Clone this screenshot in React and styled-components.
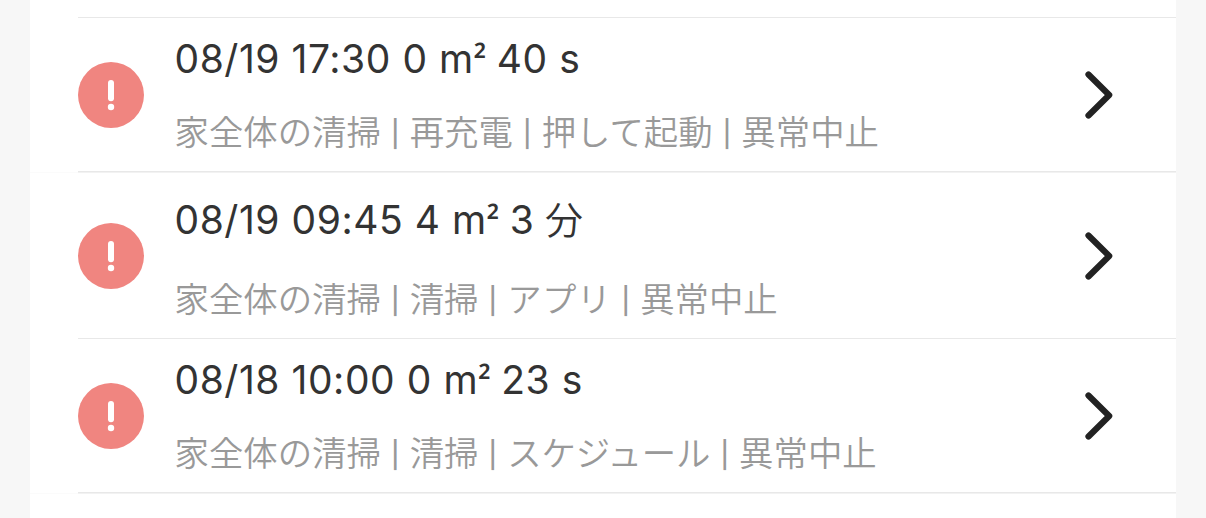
import React from 'react';
import styled, { createGlobalStyle } from 'styled-components';

const GlobalStyle = createGlobalStyle`
  * { box-sizing: border-box; }
  body {
    margin: 0;
    background: #f7f7f7;
    font-family: Inter, "Noto Sans CJK JP", sans-serif;
    overflow: hidden;
  }
`;

const Panel = styled.main`
  height: 518px;
  margin: 0 30px;
  padding-top: 17px;
  background: #fff;
  overflow: hidden;
`;

const List = styled.ul`
  margin: 0;
  padding: 0;
  list-style: none;
`;

const Divider = styled.div`
  height: 1px;
  margin-left: 48px;
  background: #e8e8e8;
`;

const SoftEdge = styled.div`
  height: 1px;
  background: linear-gradient(to right, #fbfbfb 48px, #f2f2f2 48px);
`;

const Row = styled.li`
  display: flex;
  align-items: center;
  height: ${({ $height }) => $height}px;
  padding: ${({ $shift }) => $shift}px 62px 0 48px;
`;

const StatusIcon = styled.svg`
  flex: none;
  width: 66px;
  height: 66px;
`;

const Details = styled.div`
  flex: 1;
  align-self: flex-start;
  display: flex;
  flex-direction: column;
  gap: ${({ $gap }) => $gap}px;
  margin-left: 30.5px;
  padding-top: ${({ $top }) => $top}px;
  white-space: nowrap;
`;

const Title = styled.div`
  height: 48px;
  font-size: 39px;
  line-height: 48px;
  font-weight: 400;
  letter-spacing: 0.55px;
  color: #333;
`;

const Superscript = styled.span`
  display: inline-block;
  width: 11.5px;
  font-family: "Noto Sans", sans-serif;
  font-weight: 500;
  font-size: 35px;
  line-height: 1;
`;

const Unit = styled.span`
  font-family: "Noto Sans CJK JP", sans-serif;
  font-weight: 350;
  font-size: 38px;
  line-height: 1;
  margin-left: -1px;
`;

const Meta = styled.div`
  display: flex;
  height: 48px;
  font-family: "Noto Sans CJK JP", sans-serif;
  font-size: 34.4px;
  line-height: 48px;
  font-weight: 350;
  color: #999;
`;

const Segment = styled.span`
  letter-spacing: ${({ $spacing }) => $spacing || 0}px;
`;

const Separator = styled.span`
  width: 28.8px;
  text-align: center;
  font-family: Inter, sans-serif;
  font-size: 26px;
  font-weight: 500;
  line-height: 56px;
`;

const Chevron = styled.svg`
  flex: none;
  width: 30px;
  height: 50px;
`;

const records = [
  {
    when: '08/19 17:30', area: '0', value: '40', unit: 's',
    meta: [['家全体の清掃'], ['再充電'], ['押して起動'], ['異常中止']],
    height: 153, top: 17, gap: 23, shift: 0, edge: true,
  },
  {
    when: '08/19 09:45', area: '4', value: '3', unit: '分',
    meta: [['家全体の清掃'], ['清掃'], ['アプリ', 0.3], ['異常中止']],
    height: 165, top: 22, gap: 29, shift: 1,
  },
  {
    when: '08/18 10:00', area: '0', value: '23', unit: 's',
    meta: [['家全体の清掃'], ['清掃'], ['スケジュール', -0.15], ['異常中止']],
    height: 153, top: 17, gap: 23, shift: 0, edge: true,
  },
];

function Alert() {
  return (
    <StatusIcon viewBox="0 0 66 66">
      <circle cx="33" cy="33" r="33" fill="#f08580" />
      <path d="M33 21v15.3" stroke="#fff" strokeWidth="6" strokeLinecap="round" />
      <circle cx="33" cy="45" r="3.2" fill="#fff" />
    </StatusIcon>
  );
}

export default function App() {
  return (
    <>
      <GlobalStyle />
      <Panel>
        <Divider />
        <List>
          {records.map((r) => (
            <React.Fragment key={r.when}>
              <Row $height={r.height} $shift={r.shift}>
                <Alert />
                <Details $gap={r.gap} $top={r.top}>
                  <Title>
                    {r.when} {r.area} m<Superscript>²</Superscript> {r.value}{' '}
                    {r.unit === '分' ? <Unit>分</Unit> : r.unit}
                  </Title>
                  <Meta>
                    {r.meta.map(([text, spacing], n) => (
                      <React.Fragment key={text}>
                        {n > 0 && <Separator>|</Separator>}
                        <Segment $spacing={spacing}>{text}</Segment>
                      </React.Fragment>
                    ))}
                  </Meta>
                </Details>
                <Chevron viewBox="0 0 30 50" fill="none">
                  <path d="M4.5 4.5L25.2 25 4.5 45.5" stroke="#222" strokeWidth="6.2" strokeLinecap="round" strokeLinejoin="round" />
                </Chevron>
              </Row>
              <Divider />
              {r.edge && <SoftEdge />}
            </React.Fragment>
          ))}
        </List>
      </Panel>
    </>
  );
}
